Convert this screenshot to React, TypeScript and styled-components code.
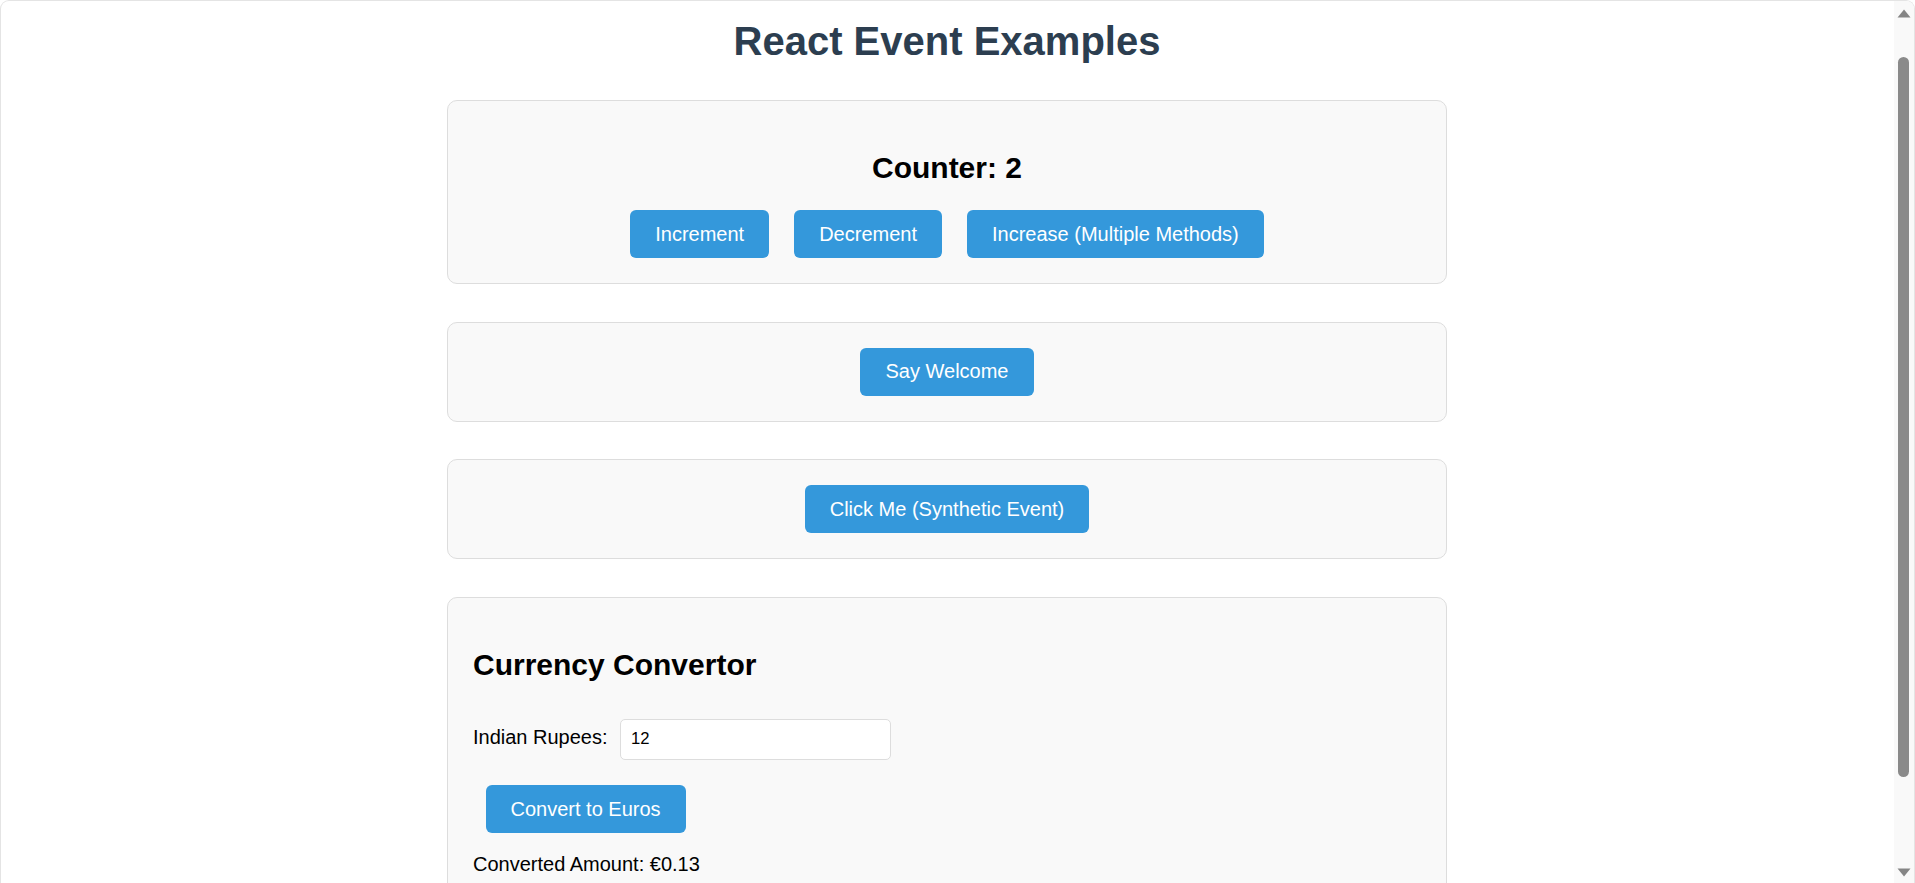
import React, { useState } from "react";
import styled, { createGlobalStyle } from "styled-components";

const GlobalStyle = createGlobalStyle`
  html, body {
    margin: 0;
    padding: 0;
    background: #ffffff;
  }
  body {
    font-family: "Liberation Sans", Arial, Helvetica, sans-serif;
    font-size: 20px;
    color: #000000;
  }
`;

const Frame = styled.div`
  position: fixed;
  inset: 0;
  border: 1px solid #e4e4e4;
  border-bottom: none;
  border-radius: 9px 9px 0 0;
  pointer-events: none;
`;

const ScrollTrack = styled.div`
  position: fixed;
  top: 1px;
  right: 1px;
  bottom: 0;
  width: 20px;
  background: #f9f9f9;
  border-top-right-radius: 8px;
  display: flex;
  flex-direction: column;
  align-items: center;
  justify-content: space-between;
  padding: 8px 0 6px;
  box-sizing: border-box;
  pointer-events: none;
  z-index: 2;
`;

const ScrollThumb = styled.div`
  position: absolute;
  top: 56px;
  left: 4px;
  width: 11px;
  height: 720px;
  border-radius: 6px;
  background: #8a8a8a;
`;

const Arrow = styled.svg`
  display: block;
  flex: none;
  width: 14px;
  height: 9px;
`;

const Page = styled.div`
  display: flex;
  flex-direction: column;
  align-items: center;
  padding: 19px 21px 110px 0;
`;

const Title = styled.h1`
  margin: 0 0 36px;
  font-size: 40px;
  font-weight: 700;
  line-height: normal;
  color: #2c3e50;
  text-align: center;
`;

const Card = styled.section<{ $align?: "center" | "left" }>`
  box-sizing: border-box;
  width: 1000px;
  margin-bottom: 37.5px;
  padding: 25px;
  background: #f9f9f9;
  border: 1px solid #dddddd;
  border-radius: 10px;
  text-align: ${(p) => p.$align ?? "center"};
`;

const Heading = styled.h2<{ $below?: number }>`
  margin: 25px 0 ${(p) => p.$below ?? 25}px;
  font-size: 30px;
  font-weight: 700;
  line-height: normal;
  color: #000000;
`;

const ButtonRow = styled.div`
  display: flex;
  justify-content: center;
  gap: 25px;
`;

const Button = styled.button`
  display: block;
  margin: 0;
  padding: 12.5px 25px;
  border: none;
  border-radius: 6px;
  background: #3498db;
  color: #ffffff;
  font-family: "Liberation Sans", Arial, Helvetica, sans-serif;
  font-size: 20px;
  line-height: 23px;
  cursor: pointer;
`;

const CenterBox = styled.div`
  display: flex;
  justify-content: center;
`;

const FieldRow = styled.div`
  display: flex;
  align-items: baseline;
  gap: 12.5px;
`;

const Label = styled.label`
  font-size: 20px;
  color: #000000;
`;

const Input = styled.input`
  box-sizing: border-box;
  width: 271px;
  height: 41.5px;
  padding: 10px;
  border: 1px solid #dddddd;
  border-radius: 5px;
  background: #ffffff;
  font-family: "Liberation Sans", Arial, Helvetica, sans-serif;
  font-size: 16.67px;
  color: #000000;
  outline: none;
`;

const ActionRow = styled.div`
  display: flex;
  padding: 25px 0 0 12.5px;
`;

const Result = styled.p`
  margin: 20px 0;
  font-size: 20px;
  line-height: 23px;
  color: #000000;
`;

export default function App() {
  const [count, setCount] = useState(2);
  const [rupees, setRupees] = useState("12");
  const [euros, setEuros] = useState("0.13");

  return (
    <>
      <GlobalStyle />
      <Page>
        <Title>React Event Examples</Title>

        <Card>
          <Heading>Counter: {count}</Heading>
          <ButtonRow>
            <Button onClick={() => setCount(count + 1)}>Increment</Button>
            <Button onClick={() => setCount(count - 1)}>Decrement</Button>
            <Button onClick={() => setCount(count + 1)}>
              Increase (Multiple Methods)
            </Button>
          </ButtonRow>
        </Card>

        <Card>
          <CenterBox>
            <Button onClick={() => alert("Welcome")}>Say Welcome</Button>
          </CenterBox>
        </Card>

        <Card>
          <CenterBox>
            <Button>Click Me (Synthetic Event)</Button>
          </CenterBox>
        </Card>

        <Card $align="left">
          <Heading $below={37}>Currency Convertor</Heading>
          <FieldRow>
            <Label htmlFor="inr">Indian Rupees:</Label>
            <Input
              id="inr"
              type="text"
              value={rupees}
              onChange={(e) => setRupees(e.target.value)}
            />
          </FieldRow>
          <ActionRow>
            <Button
              onClick={() =>
                setEuros((parseFloat(rupees || "0") * 0.011).toFixed(2))
              }
            >
              Convert to Euros
            </Button>
          </ActionRow>
          <Result>Converted Amount: €{euros}</Result>
        </Card>
      </Page>
      <ScrollTrack>
        <Arrow viewBox="0 0 14 9">
          <path d="M7 0.5 L13.5 8.5 L0.5 8.5 Z" fill="#858585" />
        </Arrow>
        <ScrollThumb />
        <Arrow viewBox="0 0 14 9">
          <path d="M0.5 0.5 L13.5 0.5 L7 8.5 Z" fill="#858585" />
        </Arrow>
      </ScrollTrack>
      <Frame />
    </>
  );
}
